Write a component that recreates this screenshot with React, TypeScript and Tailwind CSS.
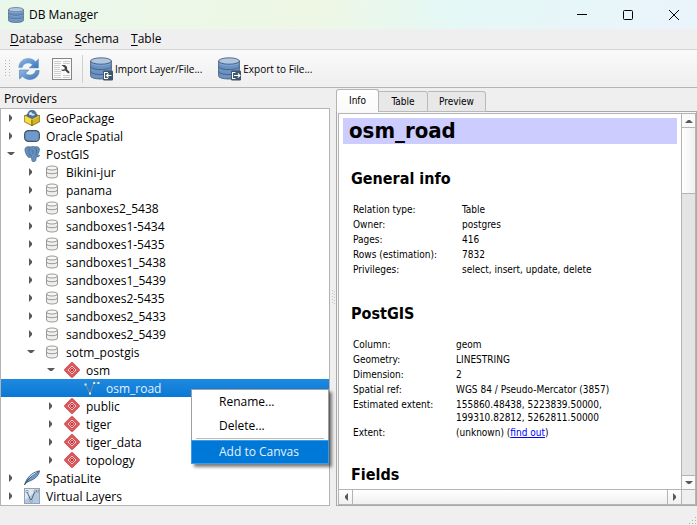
import React from "react";

type IconKind = "package" | "oracle" | "elephant" | "db" | "schema" | "line" | "feather" | "virtual";
type Branch = "open" | "closed" | "none";

interface Node {
  label: string;
  depth: 0 | 1 | 2 | 3;
  icon: IconKind;
  branch: Branch;
  selected?: boolean;
}

const nodes: Node[] = [
  { label: "GeoPackage", depth: 0, icon: "package", branch: "closed" },
  { label: "Oracle Spatial", depth: 0, icon: "oracle", branch: "closed" },
  { label: "PostGIS", depth: 0, icon: "elephant", branch: "open" },
  { label: "Bikini-jur", depth: 1, icon: "db", branch: "closed" },
  { label: "panama", depth: 1, icon: "db", branch: "closed" },
  { label: "sanboxes2_5438", depth: 1, icon: "db", branch: "closed" },
  { label: "sandboxes1-5434", depth: 1, icon: "db", branch: "closed" },
  { label: "sandboxes1-5435", depth: 1, icon: "db", branch: "closed" },
  { label: "sandboxes1_5438", depth: 1, icon: "db", branch: "closed" },
  { label: "sandboxes1_5439", depth: 1, icon: "db", branch: "closed" },
  { label: "sandboxes2-5435", depth: 1, icon: "db", branch: "closed" },
  { label: "sandboxes2_5433", depth: 1, icon: "db", branch: "closed" },
  { label: "sandboxes2_5439", depth: 1, icon: "db", branch: "closed" },
  { label: "sotm_postgis", depth: 1, icon: "db", branch: "open" },
  { label: "osm", depth: 2, icon: "schema", branch: "open" },
  { label: "osm_road", depth: 3, icon: "line", branch: "none", selected: true },
  { label: "public", depth: 2, icon: "schema", branch: "closed" },
  { label: "tiger", depth: 2, icon: "schema", branch: "closed" },
  { label: "tiger_data", depth: 2, icon: "schema", branch: "closed" },
  { label: "topology", depth: 2, icon: "schema", branch: "closed" },
  { label: "SpatiaLite", depth: 0, icon: "feather", branch: "closed" },
  { label: "Virtual Layers", depth: 0, icon: "virtual", branch: "closed" },
];

const indent = ["pl-0", "pl-5", "pl-10", "pl-15"];

const generalRows: [string, string][] = [
  ["Relation type:", "Table"],
  ["Owner:", "postgres"],
  ["Pages:", "416"],
  ["Rows (estimation):", "7832"],
  ["Privileges:", "select, insert, update, delete"],
];

const postgisRows: [string, React.ReactNode][] = [
  ["Column:", "geom"],
  ["Geometry:", "LINESTRING"],
  ["Dimension:", "2"],
  ["Spatial ref:", "WGS 84 / Pseudo-Mercator (3857)"],
  [
    "Estimated extent:",
    <>
      155860.48438, 5223839.50000,
      <br />
      199310.82812, 5262811.50000
    </>,
  ],
  [
    "Extent:",
    <>
      (unknown) (
      <a href="#extent" className="text-[#0000ff] underline">
        find out
      </a>
      )
    </>,
  ],
];

function Cylinder({ className }: { className: string }) {
  return (
    <svg viewBox="0 0 22 22" className={className} aria-hidden="true">
      <path d="M.7 3.500v15c0 1.600 4.500 2.800 10.300 2.800s10.300-1.200 10.300-2.800v-15z" fill="#6a93c4" stroke="#5b708a" strokeWidth="1" />
      <ellipse cx="11" cy="3.700" rx="10.300" ry="3" fill="#aec6e3" stroke="#5b708a" strokeWidth="1" />
      <path d="M.7 8.700c0 1.600 4.500 2.800 10.300 2.800s10.300-1.200 10.300-2.800M.7 13.700c0 1.600 4.500 2.800 10.300 2.800s10.300-1.200 10.300-2.800" fill="none" stroke="#3f5673" strokeWidth="1" />
      <path d="M1.300 5.800c2 1.200 6 1.700 9.700 1.700s7.700-.5 9.700-1.700M1.300 10c2 1.800 6 2.500 9.700 2.500s7.700-.7 9.700-2.500M1.300 15c2 1.800 6 2.500 9.700 2.500s7.700-.7 9.700-2.500" fill="none" stroke="#9dbbdd" strokeWidth=".7" />
    </svg>
  );
}

function TransferIcon({ out }: { out?: boolean }) {
  return (
    <svg viewBox="0 0 24 24" className="size-6" aria-hidden="true">
      <path d="M1.600 4v15c0 1.700 4.500 3 10.400 3s10.400-1.300 10.400-3V4z" fill="#6a93c4" stroke="#44546a" strokeWidth=".8" />
      <ellipse cx="12" cy="4" rx="10.400" ry="3.200" fill="#aec6e3" stroke="#44546a" strokeWidth=".8" />
      <path d="M1.600 9.500c0 1.700 4.500 3 10.400 3s10.400-1.300 10.400-3M1.600 14.500c0 1.700 4.500 3 10.400 3s10.400-1.300 10.400-3" fill="none" stroke="#3f5673" strokeWidth=".8" />
      <path d="M2.200 6.500c2 1.300 5.600 1.900 9.800 1.900s7.800-.6 9.800-1.900" fill="none" stroke="#9dbbdd" strokeWidth=".5" />
      <rect x="14" y="13.500" width="10" height="10" rx="1.200" fill="#3b566d" />
      {out ? (
        <path d="M18.500 15.500h-3v6h3M17 18.500h6M20.800 16.300l2.200 2.200-2.200 2.200" fill="none" stroke="#fff" strokeWidth="1.100" />
      ) : (
        <path d="M19 15.500h-3.500v6H19M22.500 18.500h-5M19.500 16.500l-2 2 2 2" fill="none" stroke="#fff" strokeWidth="1.100" />
      )}
    </svg>
  );
}

function RefreshIcon() {
  return (
    <svg viewBox="0 0 24 24" className="size-6" aria-hidden="true">
      <defs>
        <linearGradient id="rf" x1="0" y1="0" x2="1" y2="1">
          <stop offset="0" stopColor="#8fb8e4" />
          <stop offset="1" stopColor="#3a75b8" />
        </linearGradient>
      </defs>
      <path d="M1.800 10.500C2 5 6 1.500 11 1.500c3.300 0 5.800 1.200 7.500 3.200L21.500 2v9h-9.300l3.300-3.200C14.300 6.500 12.800 6 11 6c-3 0-5 1.700-5.800 4.500z" fill="url(#rf)" stroke="#5f92c9" strokeWidth=".5" />
      <path d="M22.200 13.500C22 19 18 22.500 13 22.500c-3.300 0-5.800-1.200-7.500-3.200L2.500 22v-9h9.300l-3.300 3.200c1.200 1.300 2.700 1.800 4.500 1.800 3 0 5-1.700 5.800-4.500z" fill="url(#rf)" stroke="#3a70ad" strokeWidth=".5" />
    </svg>
  );
}

function SqlWindowIcon() {
  return (
    <svg viewBox="0 0 20 22" className="h-[22px] w-5" aria-hidden="true">
      <rect x=".5" y=".5" width="19" height="21" fill="#fafafa" stroke="#858585" />
      <path d="M2 3.500h7M2 5.500h7M2 7.500h6M2 9.500h6M2 11.500h6M2 13.500h7M2 15.500h7M2 17.500h7M11 3.500h7M11 5.500h7M11 17.500h7M11 19.500h7M2 19.500h7" stroke="#c2c2c2" strokeWidth=".8" />
      <path d="M9.500 7.300c1.500-.7 3.800-.6 5 .9 1 1.300.7 2.300.5 3l2.800 3-1.600 1.400-3-3c-1.500.6-3.200.4-4.300-.9l3.300-.2c.8-.7.8-1.800-.3-2.500z" fill="#454545" />
    </svg>
  );
}

function NodeIcon({ kind }: { kind: IconKind }) {
  const c = "size-4 shrink-0";
  switch (kind) {
    case "package":
      return (
        <svg viewBox="0 0 16 16" className={c} aria-hidden="true">
          <path d="M.3 5.500 8 2l7.700 3.500L8 9z" fill="#8d7a18" />
          <circle cx="8" cy="4.500" r="4.300" fill="#4c75a3" stroke="#304d70" strokeWidth=".6" />
          <path d="M5 3.500c1-2 2.500-2 3-.5s1.500 0 2.500 1-1 2-2.500 1.500S5.500 6 5 3.500z" fill="#d5e4f1" />
          <path d="M.3 5.500 8 9v6.700l-7.700-4z" fill="#f7dc3c" stroke="#514507" strokeWidth=".6" />
          <path d="M15.700 5.500 8 9v6.700l7.700-4z" fill="#d5b51c" stroke="#514507" strokeWidth=".6" />
          <path d="m1 6 7 3.500L15 6" fill="none" stroke="#fff6ad" strokeWidth=".6" />
        </svg>
      );
    case "oracle":
      return (
        <svg viewBox="0 0 16 16" className={c} aria-hidden="true">
          <rect x=".6" y="2.600" width="14.800" height="10.800" rx="4" fill="#6f9acb" stroke="#42566d" strokeWidth="1.200" />
        </svg>
      );
    case "elephant":
      return (
        <svg viewBox="0 0 16 16" className={c} aria-hidden="true">
          <path d="M1.200 2.200C2.500.5 4.800.4 6.200 1 8 .2 10 .3 11 1c1.600-.7 3.700-.2 4.300 1.500.5 2-.8 5-1.800 6.800.6.4 1.400.3 2.200.1-.5 1.200-2 1.600-3.500 1.500-.3 1.500.1 3.700-1.300 4.600-1.300.6-2.800.2-3.100-1.200-.3-1.300-.1-2.500-.4-3.600-1 1-2.100 1.300-3.400.2C2 8.800.3 4.600 1.200 2.200z" fill="#6590bd" stroke="#4a6e96" strokeWidth=".8" />
          <path d="M6 1.200c-1.300 2-1.200 4.200-.9 6.200.2 1.200.9 2 2.400 1.800M10.800 1.200c1.400 1.500 2 3.400 1.700 5.400-.2 1.200-.8 2-.2 3M7 4.500c1-.7 1.800-.5 2 .5s0 2-.2 3" fill="none" stroke="#3f648d" strokeWidth=".7" />
        </svg>
      );
    case "db":
      return (
        <svg viewBox="0 0 16 16" className={c} aria-hidden="true">
          <path d="M2.500 4v8c0 1.200 2.500 2 5.500 2s5.500-.8 5.500-2V4z" fill="#efefed" stroke="#8e8e8c" strokeWidth=".9" />
          <ellipse cx="8" cy="4" rx="5.500" ry="2" fill="#f7f7f5" stroke="#8e8e8c" strokeWidth=".9" />
          <path d="M2.500 8c0 1 2.500 1.700 5.500 1.700s5.500-.7 5.500-1.700" fill="none" stroke="#8e8e8c" strokeWidth=".9" />
        </svg>
      );
    case "schema":
      return (
        <svg viewBox="0 0 16 16" className={c} aria-hidden="true">
          <path d="m8 1.500 6.500 6.500L8 14.500 1.500 8z" fill="#fff" stroke="#d0393f" strokeWidth="2.600" strokeLinejoin="round" />
          <path d="m8 1.500 6.500 6.500L8 14.500 1.500 8z" fill="none" stroke="#f2a4a4" strokeWidth=".6" />
          <path d="m8 5.200 2.800 2.800L8 10.800 5.200 8z" fill="#fff" stroke="#d0393f" strokeWidth="1.200" strokeLinejoin="round" />
          <rect x="7" y="7" width="2" height="2" fill="#c42f36" />
        </svg>
      );
    case "line":
      return (
        <svg viewBox="0 0 16 16" className={c} aria-hidden="true">
          <path d="m1.500 4.500 4.500 9 4-10.500h4.500" fill="none" stroke="#7d8a94" strokeWidth="1.100" />
          <path d="M.6 3.500h1.900v1.900H.6zM5 12.500h2v2H5zM9.200 2h1.900v1.900H9.200zM13.500 2h1.900v1.900h-1.900z" fill="#f4efe6" />
        </svg>
      );
    case "feather":
      return (
        <svg viewBox="0 0 16 16" className={c} aria-hidden="true">
          <path d="M.7 14.500C2.500 8.500 7 2.500 15.500.8c-.2 2.400-1.600 4.800-3.700 6.700C9 10 5.500 11 3 12.200z" fill="#6e9cc8" stroke="#38536d" strokeWidth=".8" />
          <path d="M.5 15C3.500 9.500 8 5 14.500 1.500" fill="none" stroke="#2e465e" strokeWidth=".9" />
          <path d="M3.500 9.500C6 5.500 9.500 2.800 14 1.500L6 7.300z" fill="#dbe9f4" />
        </svg>
      );
    case "virtual":
      return (
        <svg viewBox="0 0 16 16" className={c} aria-hidden="true">
          <rect x=".5" y=".5" width="15" height="15" fill="#b3c9e2" stroke="#8ba4bf" />
          <path d="M1 1h14L1 12z" fill="#dde8f3" />
          <path d="m3 3.500 4 9.500L11 3h2.500" fill="none" stroke="#54616d" strokeWidth="1" />
          <path d="M2 2.500h2v2H2zM6 12h2v2H6zM10 2h2v2h-2zM12.800 2h1.700v2h-1.700z" fill="#fff" stroke="#54616d" strokeWidth=".5" />
        </svg>
      );
  }
}

type Direction = "up" | "down" | "left" | "right";

const arrowPaths: Record<Direction, string> = {
  up: "M0 6h8L5 3H3z",
  down: "M0 2h8L5 5H3z",
  left: "M6 0v8L3 5V3z",
  right: "M2 0v8l3-3V3z",
};

function Arrow({ dir }: { dir: Direction }) {
  return (
    <svg viewBox="0 0 8 8" className="size-2" aria-hidden="true">
      <path d={arrowPaths[dir]} fill="#5a5a5a" />
    </svg>
  );
}

function ContextMenu() {
  return (
    <div
      role="menu"
      className="absolute top-[10px] left-[190px] z-10 flex w-[138px] flex-col border border-[#a0a0a0] bg-white text-black shadow-[3px_3px_3px_rgba(0,0,0,0.5)]"
    >
      <button role="menuitem" className="h-6 pl-[27px] text-left">Rename...</button>
      <button role="menuitem" className="h-6 pl-[27px] text-left">Delete...</button>
      <div className="mx-1 border-t border-[#bdbdbd]" />
      <button role="menuitem" className="-mx-px mt-px -mb-px h-6 border border-[#3d9ae8] bg-[#0078d7] pl-[27px] text-left text-[#e6f1fb]">
        Add to Canvas
      </button>
    </div>
  );
}

function TreeRow({ node }: { node: Node }) {
  return (
    <li
      role="treeitem"
      aria-selected={!!node.selected}
      className={
        "relative flex h-[18px] items-center " +
        indent[node.depth] +
        (node.selected ? " bg-linear-to-b from-[#1d89e0] to-[#0a78d4] text-[#e6f1fb]" : "")
      }
    >
      <span className="flex w-[23px] shrink-0 items-center pl-[6px]">
        {node.branch !== "none" && <Arrow dir={node.branch === "open" ? "down" : "right"} />}
      </span>
      <NodeIcon kind={node.icon} />
      <span className="pt-px pl-[6px] whitespace-nowrap">{node.label}</span>
      {node.selected && <ContextMenu />}
    </li>
  );
}

function InfoTable({ rows, labelWidth }: { rows: [string, React.ReactNode][]; labelWidth: string }) {
  return (
    <table className="mx-[10px] leading-[13px]">
      <tbody>
        {rows.map(([name, value]) => (
          <tr key={name} className="align-top">
            <th scope="row" className={"py-px text-left font-normal whitespace-nowrap " + labelWidth}>
              {name}
            </th>
            <td className="py-px whitespace-nowrap">{value}</td>
          </tr>
        ))}
      </tbody>
    </table>
  );
}

export default function App() {
  return (
    <div className="flex h-screen flex-col overflow-hidden bg-[#efefef] font-['Open_Sans','Noto_Sans',sans-serif] text-[12px] leading-4 text-black">
      <header className="flex h-[29px] shrink-0 items-center bg-[linear-gradient(100deg,#eaf8ec_0%,#eef7e4_45%,#e4f8f6_65%,#eaf4fb_100%)] pl-2">
        <Cylinder className="size-4" />
        <h1 className="pl-[5px]">DB Manager</h1>
        <div className="ml-auto flex h-full">
          <button aria-label="Minimize" className="flex w-[46px] items-center justify-center">
            <svg viewBox="0 0 10 10" className="size-[10px]" aria-hidden="true"><path d="M0 4.500h10" stroke="#000" /></svg>
          </button>
          <button aria-label="Maximize" className="flex w-[46px] items-center justify-center">
            <svg viewBox="0 0 10 10" className="size-[10px]" aria-hidden="true"><rect x=".5" y=".5" width="9" height="9" rx="1" fill="none" stroke="#000" /></svg>
          </button>
          <button aria-label="Close" className="flex w-[46px] items-center justify-center">
            <svg viewBox="0 0 10 10" className="size-[10px]" aria-hidden="true"><path d="m0 0 10 10M10 0 0 10" stroke="#000" /></svg>
          </button>
        </div>
      </header>

      <nav className="flex h-[21px] shrink-0 items-center gap-3 border-b border-[#d4d4d4] pl-[10px]">
        <button><span className="underline underline-offset-2">D</span>atabase</button>
        <button><span className="underline underline-offset-2">S</span>chema</button>
        <button><span className="underline underline-offset-2">T</span>able</button>
      </nav>

      <div role="toolbar" className="flex h-[38px] shrink-0 items-center border-b border-[#b4b4b4] bg-linear-to-b from-[#fafafa] to-[#efefef] pl-[5px] text-[10px]">
        <svg viewBox="0 0 5 18" className="mr-[7px] h-[18px] w-[5px]" aria-hidden="true">
          <path d="M.5 0v18M4.500 0v18" stroke="#b5b5b5" strokeDasharray="1 2" />
        </svg>
        <button aria-label="Refresh" className="mr-[11px]"><RefreshIcon /></button>
        <button aria-label="SQL Window"><SqlWindowIcon /></button>
        <div className="mr-[6px] ml-[10px] h-7 border-l border-[#cfcfcf]" />
        <button className="flex items-center whitespace-nowrap"><TransferIcon /><span className="pl-[2px]">Import Layer/File...</span></button>
        <button className="ml-[15px] flex items-center whitespace-nowrap"><TransferIcon out /><span className="pl-[2px]">Export to File...</span></button>
      </div>

      <div className="flex min-h-0 flex-1">
        <section className="flex w-[330px] shrink-0 flex-col">
          <h2 className="h-5 pt-[3px] pl-1">Providers</h2>
          <ul role="tree" className="min-h-0 flex-1 border border-[#b4b4b4] bg-white">
            {nodes.map((n) => (
              <TreeRow key={n.label} node={n} />
            ))}
          </ul>
        </section>

        <div className="flex w-[6px] shrink-0 items-center justify-center" aria-hidden="true">
          <svg viewBox="0 0 3 15" className="h-[15px] w-[3px]"><path d="M.5 0v15M2.500 1v14" stroke="#c3c3c3" strokeDasharray="1 2" /></svg>
        </div>

        <section className="flex min-w-0 flex-1 flex-col pt-px font-['DejaVu_Sans_Condensed','Noto_Sans',sans-serif] text-[10px]">
          <div role="tablist" className="flex h-[23px] items-end">
            <button role="tab" aria-selected="true" className="z-[1] h-[23px] w-[43px] rounded-t-[3px] border border-b-0 border-[#b4b4b4] bg-linear-to-b from-white to-[#fafafa]">Info</button>
            <button role="tab" aria-selected="false" className="h-[21px] w-[49px] rounded-tr-[3px] border border-l-0 border-[#b9b9b9] bg-[#e8e8e8]">Table</button>
            <button role="tab" aria-selected="false" className="h-[21px] w-[58px] rounded-tr-[3px] border border-l-0 border-[#b9b9b9] bg-[#e8e8e8]">Preview</button>
            <div className="flex-1 self-stretch border-b border-[#a9a9a9]" />
          </div>
          <div className="flex min-h-0 flex-1 flex-col border border-t-0 border-[#a9a9a9] bg-[#f8f8f8] pt-px pl-px">
            <div className="grid min-h-0 flex-1 grid-cols-[1fr_14px] grid-rows-[1fr_15px] border border-[#b4b4b4]">
              <article className="min-h-0 min-w-0 overflow-hidden bg-white p-1">
                <h2 className="h-[26px] bg-[#ccccff] pl-[6px] text-[22px] leading-[26px] font-bold">osm_road</h2>
                <h3 className="mt-6 mb-3 ml-2 text-[16px] leading-[22px] font-bold">General info</h3>
                <InfoTable rows={generalRows} labelWidth="w-[109px] min-w-[109px]" />
                <h3 className="mt-[26px] mb-3 ml-2 text-[16px] leading-[22px] font-bold">PostGIS</h3>
                <InfoTable rows={postgisRows} labelWidth="w-[103px] min-w-[103px]" />
                <h3 className="mt-6 ml-2 text-[16px] leading-[22px] font-bold">Fields</h3>
              </article>
              <div className="flex min-h-0 flex-col border-l border-[#b4b4b4] bg-[#e4e4e4]">
                <button aria-label="Scroll up" className="flex h-[13px] items-center justify-center bg-[#fafafa]"><Arrow dir="up" /></button>
                <div className="h-[67px] border-y border-[#b4b4b4] bg-linear-to-r from-white to-[#f0f0f0]" />
                <button aria-label="Scroll down" className="mt-auto flex h-[14px] items-center justify-center border-t border-[#b4b4b4] bg-[#fafafa]"><Arrow dir="down" /></button>
              </div>
              <div className="flex border-t border-[#b4b4b4] bg-linear-to-b from-white to-[#f0f0f0]">
                <button aria-label="Scroll left" className="flex w-[14px] items-center justify-center border-r border-[#b4b4b4]"><Arrow dir="left" /></button>
                <button aria-label="Scroll right" className="ml-auto flex w-[14px] items-center justify-center border-l border-[#b4b4b4]"><Arrow dir="right" /></button>
              </div>
              <div className="border-t border-l border-[#b4b4b4] bg-[#efefef]" />
            </div>
          </div>
        </section>
      </div>

      <footer className="flex h-[19px] shrink-0 items-end justify-end">
        <svg viewBox="0 0 9 9" className="size-[9px]" aria-hidden="true">
          <path d="M7 1h1v1H7zM4 4h1v1H4zM7 4h1v1H7zM1 7h1v1H1zM4 7h1v1H4zM7 7h1v1H7z" fill="#b0b0b0" />
        </svg>
      </footer>
    </div>
  );
}
